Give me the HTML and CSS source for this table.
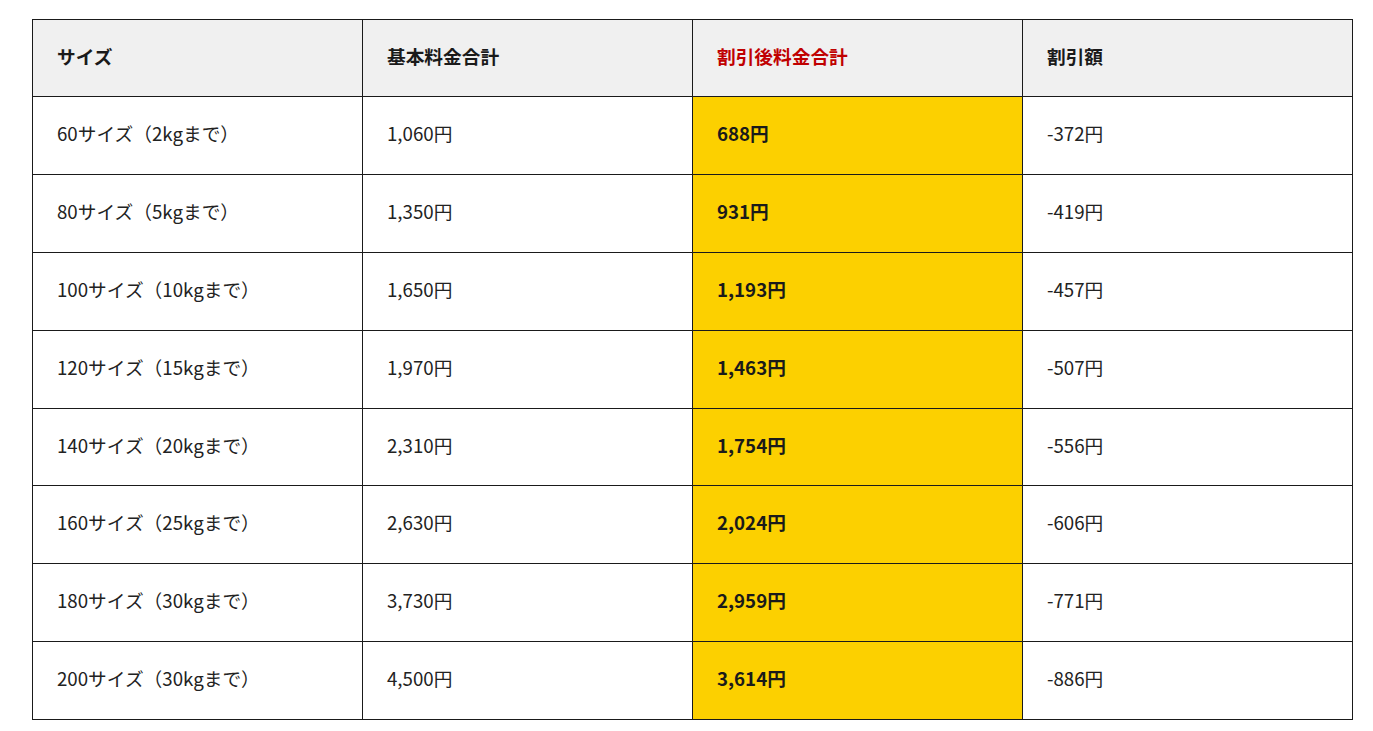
FILE: index.html
```html
<!DOCTYPE html>
<html lang="ja">
<head>
<meta charset="utf-8">
<link rel="stylesheet" href="styles.css">
</head>
<body>
<div class="wrap">
<table class="price">
<thead>
<tr><th>サイズ</th><th>基本料金合計</th><th class="red">割引後料金合計</th><th>割引額</th></tr>
</thead>
<tbody>
<tr><td>60サイズ（2kgまで）</td><td>1,060円</td><td class="hl">688円</td><td>-372円</td></tr>
<tr><td>80サイズ（5kgまで）</td><td>1,350円</td><td class="hl">931円</td><td>-419円</td></tr>
<tr><td>100サイズ（10kgまで）</td><td>1,650円</td><td class="hl">1,193円</td><td>-457円</td></tr>
<tr><td>120サイズ（15kgまで）</td><td>1,970円</td><td class="hl">1,463円</td><td>-507円</td></tr>
<tr><td>140サイズ（20kgまで）</td><td>2,310円</td><td class="hl">1,754円</td><td>-556円</td></tr>
<tr><td>160サイズ（25kgまで）</td><td>2,630円</td><td class="hl">2,024円</td><td>-606円</td></tr>
<tr><td>180サイズ（30kgまで）</td><td>3,730円</td><td class="hl">2,959円</td><td>-771円</td></tr>
<tr><td>200サイズ（30kgまで）</td><td>4,500円</td><td class="hl">3,614円</td><td>-886円</td></tr>
</tbody>
</table>
</div>
</body>
</html>
```
FILE: styles.css
```css
body {
  margin: 0;
  background: #fff;
  font-family: "Noto Sans CJK JP", "Noto Sans", sans-serif;
  color: #222;
}
.wrap {
  padding: 19px 0 0 32px;
}
.price {
  border-collapse: collapse;
  table-layout: fixed;
  width: 1321px;
}
.price th,
.price td {
  border: 1px solid #1a1a1a;
  padding: 22px 24px 26px;
  font-size: 18.7px;
  line-height: 28.9px;
  text-align: left;
  vertical-align: middle;
}
.price th {
  background: #f0f0f0;
  font-weight: bold;
  color: #1a1a1a;
  padding-bottom: 25px;
}
.price th.red {
  color: #c00000;
}
.price td.hl {
  background: #fcd000;
  font-weight: bold;
  color: #1a1a1a;
}
```
